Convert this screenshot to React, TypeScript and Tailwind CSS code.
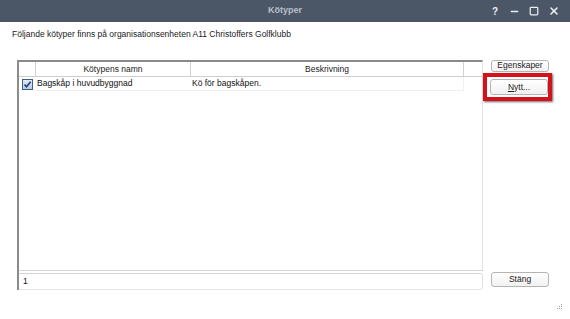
import { X, Minus, Square } from "lucide-react";

const font = { fontFamily: '"Liberation Sans", Arial, sans-serif' };

function Checkbox() {
  return (
    <div className="w-[11px] h-[11px] border border-[#3c5f8f] bg-gradient-to-b from-[#dfe9f7] to-[#b9cbe6] flex items-center justify-center">
      <svg width="9" height="9" viewBox="0 0 9 9">
        <path d="M1.5 4.5 L3.5 6.8 L7.6 1.8" fill="none" stroke="#1e3f73" strokeWidth="1.6" />
      </svg>
    </div>
  );
}

function Btn({ children, className = "" }: { children: React.ReactNode; className?: string }) {
  return (
    <button
      className={`w-[58px] rounded-[3px] border border-[#b4b4b4] bg-gradient-to-b from-white to-[#f1f1f1] text-[8.5px] text-[#222] flex items-center justify-center ${className}`}
    >
      {children}
    </button>
  );
}

export default function App() {
  return (
    <div className="w-[570px] h-[319px] bg-white flex flex-col overflow-hidden" style={font}>
      {/* Title bar */}
      <div className="h-[22px] bg-[#4b5667] flex items-center relative shrink-0">
        <span className="flex-1 text-center text-[9px] font-bold text-[#b9c1cd]">Kötyper</span>
        <div className="absolute right-[10px] top-0 h-[22px] flex items-center gap-[9px] text-[#e9edf2]">
          <span className="w-[10px] text-center text-[10px] font-bold">?</span>
          <Minus size={11} strokeWidth={3} />
          <Square size={10} strokeWidth={3} />
          <X size={12} strokeWidth={3.2} />
        </div>
      </div>

      {/* Body */}
      <div className="flex-1 flex flex-col pl-[12px] relative">
        <p className="mt-[7px] text-[8.5px] text-[#1a1a1a] leading-[11px]">
          Följande kötyper finns på organisationsenheten A11 Christoffers Golfklubb
        </p>

        <div className="mt-[20px] ml-[5px] flex gap-[8px]">
          {/* Table */}
          <div className="w-[466px] h-[230px] flex flex-col border-l-2 border-l-[#8c8c8c]">
            <div className="h-[211px] border-t-2 border-t-[#8a8a8a] border-r border-r-[#e2e2e2] border-b border-b-[#d4d4d4]">
              <div className="flex h-[15px] border-b border-[#cfcfcf] text-[8.5px] text-[#222]">
                <div className="w-[17px] border-r border-[#d2d2d2]" />
                <div className="w-[155px] border-r border-[#d2d2d2] flex items-center justify-center">Kötypens namn</div>
                <div className="w-[273px] border-r border-[#d2d2d2] flex items-center justify-center">Beskrivning</div>
                <div className="flex-1" />
              </div>
              <div className="flex h-[14px] text-[8.5px] text-[#111]">
                <div className="w-[17px] flex items-center justify-center">
                  <Checkbox />
                </div>
                <div className="w-[155px] flex items-center pl-[1px] border-b border-[#f0f0f0]">Bagskåp i huvudbyggnad</div>
                <div className="w-[273px] flex items-center pl-[1px] border-b border-r border-[#f0f0f0]">Kö för bagskåpen.</div>
              </div>
            </div>
            <div className="mt-[2px] h-[17px] border-t border-[#d4d4d4] border-r border-b border-r-[#e2e2e2] border-b-[#e6e6e6] rounded-r-[3px] flex items-center pl-[4px] text-[8.5px] text-[#111]">
              1
            </div>
          </div>

          {/* Buttons */}
          <div className="flex flex-col justify-between h-[230px]">
            <div className="flex flex-col">
              <Btn className="h-[12px] items-end leading-[11px]">Egenskaper</Btn>
              <div className="relative mt-[1px] -ml-[8px] w-[69px] h-[28px] border-[4px] border-[#d4121c] shadow-[1px_1px_2px_rgba(0,0,0,0.6)] flex items-center pl-[3px]">
                <Btn className="h-[16px]">
                  <span>
                    <span className="underline">N</span>ytt...
                  </span>
                </Btn>
              </div>
            </div>
            <Btn className="h-[15px] mb-[3px]">Stäng</Btn>
          </div>
        </div>

        {/* Resize grip */}
        <svg className="absolute right-[8px] bottom-[10px]" width="5" height="5" viewBox="0 0 5 5">
          <rect x="4" y="0" width="1" height="1" fill="#9a9a9a" />
          <rect x="2" y="2" width="1" height="1" fill="#9a9a9a" />
          <rect x="4" y="2" width="1" height="1" fill="#9a9a9a" />
          <rect x="0" y="4" width="1" height="1" fill="#9a9a9a" />
          <rect x="2" y="4" width="1" height="1" fill="#9a9a9a" />
          <rect x="4" y="4" width="1" height="1" fill="#9a9a9a" />
        </svg>
      </div>
    </div>
  );
}
